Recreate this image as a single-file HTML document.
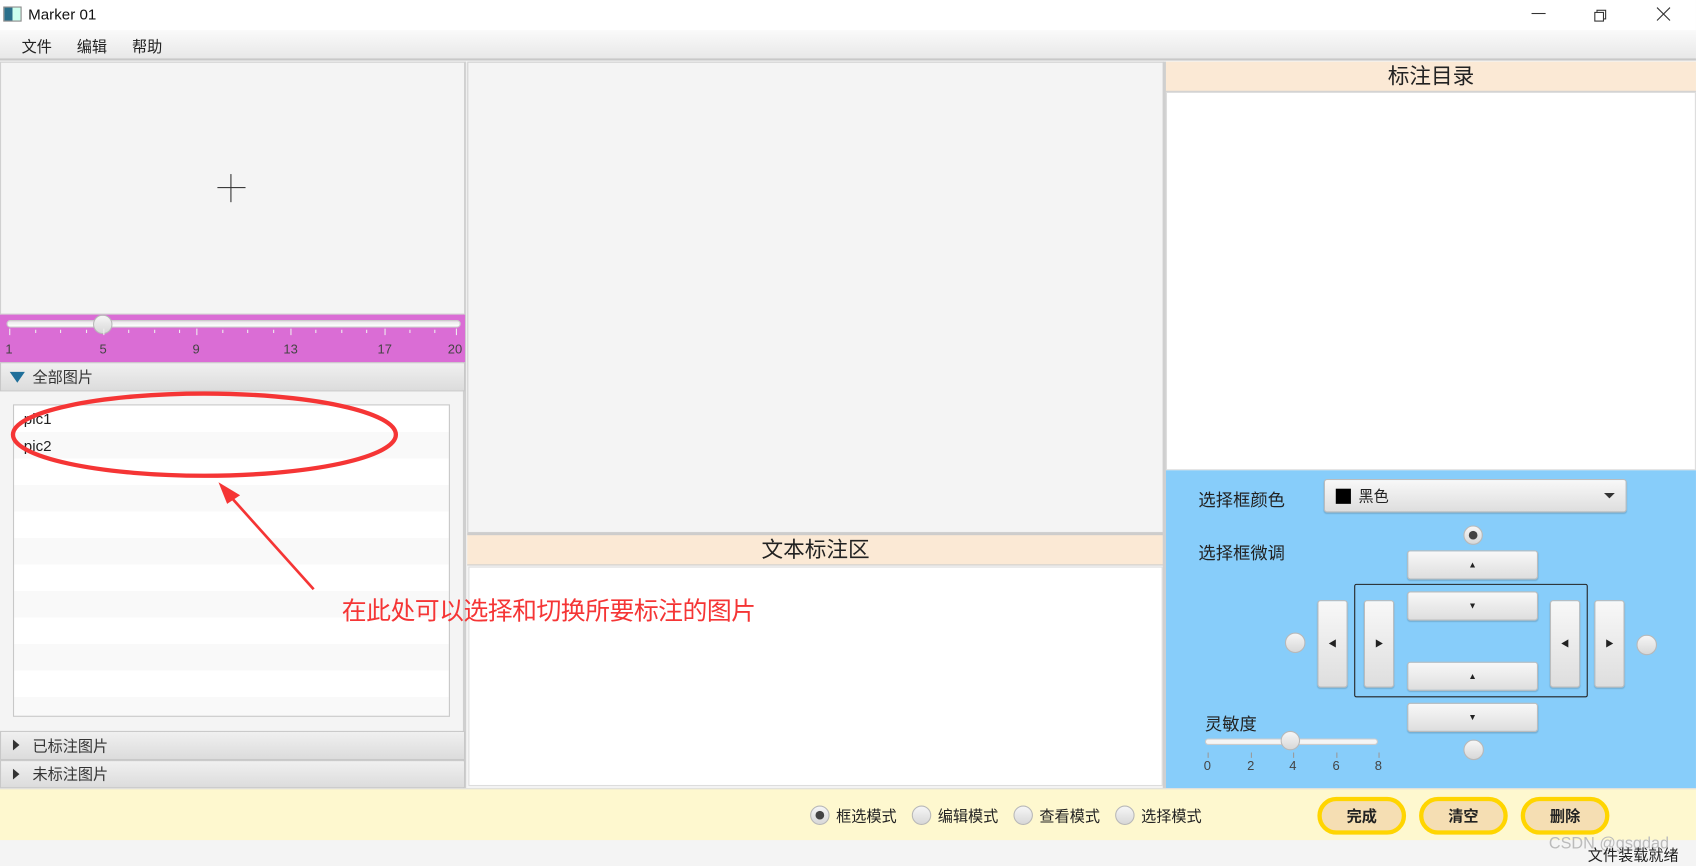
<!DOCTYPE html>
<html><head><meta charset="utf-8">
<style>
*{margin:0;padding:0;box-sizing:border-box}
html,body{width:1696px;height:866px;overflow:hidden;background:#f4f4f4}
body{font-family:"Liberation Sans","Noto Sans CJK SC",sans-serif;color:#333}
#w{position:absolute;left:0;top:0;width:1568px;height:801px;transform:scale(1.0816,1.0812);transform-origin:0 0;background:#f4f4f4}
.a{position:absolute}
.btn{position:absolute;background:linear-gradient(#f8f8f8,#dedede);border:1px solid #bcbcbc;border-radius:3px;box-shadow:0 1px 1px rgba(0,0,0,.15);display:flex;align-items:center;justify-content:center;font-size:8px;color:#222}
.rad{position:absolute;width:18px;height:18px;border-radius:50%;background:linear-gradient(#f6f6f6,#d8d8d8);border:1px solid #b8b8b8}
.rad.on::after{content:"";position:absolute;left:4px;top:4px;width:8px;height:8px;border-radius:50%;background:#444}
.hdr{position:absolute;background:linear-gradient(#f0f0f0,#dcdcdc);border:1px solid #c8c8c8;font-size:14px;color:#333;display:flex;align-items:center}
.yb{position:absolute;top:737px;width:82px;height:35px;border:4px solid #ffd500;border-radius:18px;background:#f5deb3;font-size:14px;font-weight:bold;color:#222;display:flex;align-items:center;justify-content:center}
</style></head><body><div id="w">
<div class="a" style="left:0;top:0;width:1568px;height:28px;background:#fff"></div>
<div class="a" style="left:3px;top:6px;width:17px;height:14px;border:1px solid #888;background:linear-gradient(90deg,#2b6f8a 0 50%,#cfe 50%)"></div>
<div class="a" style="left:26px;top:5px;font-size:14px;color:#111">Marker 01</div>
<div class="a" style="left:1416px;top:12px;width:13px;height:1px;background:#333"></div>
<div class="a" style="left:1476px;top:9px;width:9px;height:9px;border:1px solid #333"></div>
<div class="a" style="left:1474px;top:11px;width:9px;height:9px;border:1px solid #333;background:#fff"></div>
<svg class="a" style="left:1531px;top:6px" width="14" height="14"><path d="M1 1L13 13M13 1L1 13" stroke="#333" stroke-width="1"/></svg>
<div class="a" style="left:0;top:28px;width:1568px;height:28px;background:linear-gradient(#fafafa,#e8e8e8);border-bottom:2px solid #c8c8c8"></div>
<div class="a" style="left:20px;top:33px;font-size:14px;color:#222">文件</div>
<div class="a" style="left:71px;top:33px;font-size:14px;color:#222">编辑</div>
<div class="a" style="left:122px;top:33px;font-size:14px;color:#222">帮助</div>
<div class="a" style="left:0;top:57px;width:431px;height:672px;background:#f4f4f4;border-right:3px solid #cfcfcf"></div>
<div class="a" style="left:0;top:57px;width:430px;height:234px;border:1px solid #d0d0d0;background:#f4f4f4"></div>
<div class="a" style="left:201px;top:173px;width:26px;height:1px;background:#333"></div>
<div class="a" style="left:213px;top:161px;width:1px;height:26px;background:#333"></div>
<div class="a" style="left:0;top:291px;width:430px;height:44px;background:#da6dd5"></div>
<div class="a" style="left:6px;top:296px;width:420px;height:7px;border-radius:4px;background:linear-gradient(#e8e8e8,#fff);border:1px solid #ccc"></div>
<div class="rad" style="left:86px;top:291px;width:18px;height:18px"></div>
<svg class="a" style="left:0;top:303px" width="430" height="32">
<g stroke="#eee" stroke-width="1">
<line x1="9" y1="1" x2="9" y2="7"/><line x1="96" y1="1" x2="96" y2="7"/><line x1="182" y1="1" x2="182" y2="7"/><line x1="269" y1="1" x2="269" y2="7"/><line x1="356" y1="1" x2="356" y2="7"/><line x1="422" y1="1" x2="422" y2="7"/>
<line x1="33" y1="2" x2="33" y2="5"/><line x1="56" y1="2" x2="56" y2="5"/><line x1="80" y1="2" x2="80" y2="5"/><line x1="119" y1="2" x2="119" y2="5"/><line x1="143" y1="2" x2="143" y2="5"/><line x1="166" y1="2" x2="166" y2="5"/><line x1="206" y1="2" x2="206" y2="5"/><line x1="229" y1="2" x2="229" y2="5"/><line x1="253" y1="2" x2="253" y2="5"/><line x1="292" y1="2" x2="292" y2="5"/><line x1="316" y1="2" x2="316" y2="5"/><line x1="339" y1="2" x2="339" y2="5"/><line x1="379" y1="2" x2="379" y2="5"/><line x1="402" y1="2" x2="402" y2="5"/></g>
<g font-size="12" fill="#444" font-family="Liberation Sans"><text x="5" y="24">1</text><text x="92" y="24">5</text><text x="178" y="24">9</text><text x="262" y="24">13</text><text x="349" y="24">17</text><text x="414" y="24">20</text></g>
</svg>
<div class="hdr" style="left:0;top:335px;width:430px;height:27px;padding-left:29px">全部图片</div>
<div class="a" style="left:9px;top:344px;width:0;height:0;border-left:7px solid transparent;border-right:7px solid transparent;border-top:10px solid #1f6f9a"></div>
<div class="a" style="left:12px;top:374px;width:404px;height:289px;border:1px solid #c8c8c8;background:repeating-linear-gradient(#fff 0 24.5px,#f9f9f9 24.5px 49px)"></div>
<div class="a" style="left:22px;top:379px;font-size:14px;color:#222">pic1</div>
<div class="a" style="left:22px;top:404px;font-size:14px;color:#222">pic2</div>
<div class="hdr" style="left:0;top:676px;width:430px;height:27px;padding-left:29px">已标注图片</div>
<div class="hdr" style="left:0;top:703px;width:430px;height:26px;padding-left:29px">未标注图片</div>
<div class="a" style="left:12px;top:684px;border-top:5px solid transparent;border-bottom:5px solid transparent;border-left:6px solid #333"></div>
<div class="a" style="left:12px;top:711px;border-top:5px solid transparent;border-bottom:5px solid transparent;border-left:6px solid #333"></div>
<div class="a" style="left:432px;top:57px;width:644px;height:436px;background:#f4f4f4;border:1px solid #d0d0d0"></div>
<div class="a" style="left:432px;top:493px;width:644px;height:30px;background:#fbe9d5;border-top:2px solid #ccc;border-bottom:1px solid #ccc;text-align:center;font-size:20px;line-height:28px;color:#222">文本标注区</div>
<div class="a" style="left:433px;top:524px;width:642px;height:203px;background:#fff;border:1px solid #ddd"></div>
<div class="a" style="left:1075px;top:57px;width:3px;height:672px;background:#cfcfcf"></div>
<div class="a" style="left:1078px;top:57px;width:490px;height:28px;background:#fbe9d5;border-bottom:1px solid #ccc;text-align:center;font-size:20px;line-height:28px;color:#222">标注目录</div>
<div class="a" style="left:1078px;top:85px;width:490px;height:350px;background:#fff;border:1px solid #ddd"></div>
<div class="a" style="left:1078px;top:435px;width:490px;height:294px;background:#87cdfa"></div>
<div class="a" style="left:1108px;top:449px;font-size:16px;color:#222">选择框颜色</div>
<div class="btn" style="left:1224px;top:443px;width:280px;height:31px;justify-content:flex-start;padding-left:10px;font-size:14px"><span style="display:inline-block;width:14px;height:14px;background:#000;margin-right:7px"></span>黑色<span style="position:absolute;right:10px;top:12px;border-left:5px solid transparent;border-right:5px solid transparent;border-top:5px solid #333"></span></div>
<div class="a" style="left:1108px;top:498px;font-size:16px;color:#222">选择框微调</div>
<div class="rad on" style="left:1353px;top:486px"></div>
<div class="btn" style="left:1301px;top:509px;width:121px;height:27px">▲</div>
<div class="a" style="left:1252px;top:540px;width:216px;height:105px;border:1.5px solid #222;border-radius:2px"></div>
<div class="btn" style="left:1301px;top:547px;width:121px;height:27px">▼</div>
<div class="btn" style="left:1301px;top:612px;width:121px;height:27px">▲</div>
<div class="btn" style="left:1218px;top:555px;width:28px;height:81px">◀</div>
<div class="btn" style="left:1261px;top:555px;width:28px;height:81px">▶</div>
<div class="btn" style="left:1433px;top:555px;width:28px;height:81px">◀</div>
<div class="btn" style="left:1474px;top:555px;width:28px;height:81px">▶</div>
<div class="rad" style="left:1188px;top:585px;width:19px;height:19px"></div>
<div class="rad" style="left:1513px;top:587px;width:19px;height:19px"></div>
<div class="btn" style="left:1301px;top:650px;width:121px;height:27px">▼</div>
<div class="rad" style="left:1353px;top:684px;width:19px;height:19px"></div>
<div class="a" style="left:1114px;top:656px;font-size:16px;color:#222">灵敏度</div>
<div class="a" style="left:1114px;top:683px;width:160px;height:6px;border-radius:3px;background:#f5f5f5;border:1px solid #ccc"></div>
<div class="rad" style="left:1184px;top:676px"></div>
<svg class="a" style="left:1110px;top:695px" width="170" height="22"><g stroke="#999"><line x1="7" y1="1" x2="7" y2="6"/><line x1="47" y1="1" x2="47" y2="6"/><line x1="86" y1="1" x2="86" y2="6"/><line x1="126" y1="1" x2="126" y2="6"/><line x1="165" y1="1" x2="165" y2="6"/></g><g font-size="12" fill="#444" font-family="Liberation Sans"><text x="3" y="17">0</text><text x="43" y="17">2</text><text x="82" y="17">4</text><text x="122" y="17">6</text><text x="161" y="17">8</text></g></svg>
<div class="a" style="left:0;top:729px;width:1568px;height:48px;background:#fef8cf;border-top:1px solid #ddd"></div>
<div class="rad on" style="left:749px;top:745px"></div><div class="a" style="left:773px;top:745px;font-size:14px;color:#222">框选模式</div>
<div class="rad" style="left:843px;top:745px"></div><div class="a" style="left:867px;top:745px;font-size:14px;color:#222">编辑模式</div>
<div class="rad" style="left:937px;top:745px"></div><div class="a" style="left:961px;top:745px;font-size:14px;color:#222">查看模式</div>
<div class="rad" style="left:1031px;top:745px"></div><div class="a" style="left:1055px;top:745px;font-size:14px;color:#222">选择模式</div>
<div class="yb" style="left:1218px">完成</div>
<div class="yb" style="left:1312px">清空</div>
<div class="yb" style="left:1406px">删除</div>
<div class="a" style="left:1432px;top:772px;font-size:15px;color:#bbb">CSDN @gsgdad</div>
<div class="a" style="left:1468px;top:781px;font-size:14px;color:#222">文件装载就绪</div>
<svg class="a" style="left:0;top:0" width="1568" height="801">
<ellipse cx="189" cy="402" rx="177" ry="38" fill="none" stroke="#f53535" stroke-width="4"/>
<line x1="290" y1="545" x2="212" y2="458" stroke="#f53535" stroke-width="2.5"/>
<polygon points="202,446 222,458 210,466" fill="#f53535"/>
</svg>
<div class="a" style="left:316px;top:546px;font-size:23px;color:#f53535;letter-spacing:-0.5px;white-space:nowrap">在此处可以选择和切换所要标注的图片</div>
</div></body></html>
